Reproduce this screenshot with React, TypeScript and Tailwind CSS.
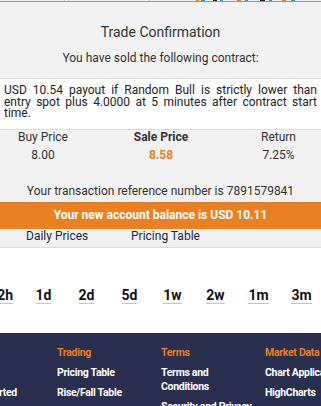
const periods = ['1d', '2d', '5d', '1w', '2w', '1m', '3m']

export default function App() {
  return (
    <div
      className="relative h-[406px] w-[321px] overflow-hidden bg-white text-[#333]"
      style={{ fontFamily: 'Roboto, "Liberation Sans", sans-serif' }}
    >
      {/* strip of the page behind the dialog */}
      <div className="flex h-px bg-[#f2f2f2]">
        <span className="ml-[64px] w-px bg-[#ccc]" />
        <span className="ml-[3px] w-px bg-[#ccc]" />
        <span className="ml-[80px] w-px bg-[#ccc]" />
        <span className="ml-[46px] w-[3px] bg-[#e98024]" />
        <span className="ml-[2px] w-[4px] bg-[#3a8fd8]" />
        <span className="ml-[8px] w-[4px] bg-[#222]" />
        <span className="ml-[3px] w-[3px] bg-[#3a8fd8]" />
        <span className="ml-[14px] w-[4px] bg-[#e98024]" />
        <span className="ml-[4px] w-[3px] bg-[#3a8fd8]" />
        <span className="ml-[12px] w-[5px] bg-[#222]" />
        <span className="ml-[4px] w-[3px] bg-[#3a8fd8]" />
        <span className="ml-[10px] w-[4px] bg-[#e98024]" />
        <span className="ml-[5px] w-[4px] bg-[#3a8fd8]" />
      </div>
      <div className="h-px bg-[#e98024]" />

      {/* trade confirmation */}
      <div className="flex flex-col bg-[#f2f2f2] pt-[20px]">
        <h1 className="text-center text-[14px] leading-[20px] font-normal">Trade Confirmation</h1>
        <p className="mt-[7px] text-center text-[12px] leading-[18px]">
          You have sold the following contract:
        </p>
        <div className="mt-[11px] border-y border-[#dcdcdc] bg-white px-[4px] pt-[6px] pb-[9px]">
          <p className="text-justify text-[12px] leading-[11.5px] text-[#222]">
            USD 10.54 payout if Random Bull is strictly lower than entry spot plus 4.0000 at 5 minutes after contract start
            time.
          </p>
        </div>
        <div className="grid grid-cols-[86px_150px_85px] text-[12px] leading-[15px]">
          <div className="flex flex-col items-center gap-[3px]">
            <span>Buy Price</span>
            <span>8.00</span>
          </div>
          <div className="flex flex-col items-center gap-[3px]">
            <span className="font-bold">Sale Price</span>
            <span className="font-bold text-[#e98024]">8.58</span>
          </div>
          <div className="flex flex-col items-center gap-[3px]">
            <span>Return</span>
            <span>7.25%</span>
          </div>
        </div>
        <p className="mt-[20px] mb-[3px] text-center text-[12px] leading-[16px]">
          Your transaction reference number is 7891579841
        </p>
        <div className="flex h-[27px] items-center justify-center bg-[#e98024] text-[12px] font-bold text-white">
          Your new account balance is USD 10.11
        </div>
        <div className="flex h-[19px] border-b border-[#dcdcdc] pl-[26px] text-[12px] leading-[14px] text-[#1f2541]">
          <span className="w-[105px]">Daily Prices</span>
          <span>Pricing Table</span>
        </div>
      </div>

      {/* periods */}
      <div className="mt-[39px] flex text-[14px] leading-[16px] font-bold text-[#111]">
        <div className="flex w-[22px] shrink-0 justify-end pr-[9px]">
          <span className="border-b border-[#c4c4c4]">2h</span>
        </div>
        {periods.map((p) => (
          <div key={p} className="flex w-[43px] shrink-0 justify-center">
            <span className="border-b border-[#c4c4c4]">{p}</span>
          </div>
        ))}
      </div>

      {/* footer */}
      <div className="mt-[29px] flex h-[80px] bg-[#2a2e4f] pt-[13px] text-[10.5px] leading-[14px] font-bold tracking-[-0.3px]">
        <div className="flex w-[57px] shrink-0 flex-col items-end gap-[6px] pr-[40px] whitespace-nowrap text-white">
          <span>&nbsp;</span>
          <span>&nbsp;</span>
          <span>Getting Started</span>
        </div>
        <div className="flex w-[104px] shrink-0 flex-col gap-[6px] whitespace-nowrap text-white">
          <span className="text-[#e98024]">Trading</span>
          <span>Pricing Table</span>
          <span>Rise/Fall Table</span>
        </div>
        <div className="flex w-[104px] shrink-0 flex-col gap-[6px] text-white">
          <span className="text-[#e98024]">Terms</span>
          <span className="w-[75px]">Terms and Conditions</span>
          <span className="whitespace-nowrap">Security and Privacy</span>
        </div>
        <div className="flex w-[104px] shrink-0 flex-col gap-[6px] whitespace-nowrap text-white">
          <span className="text-[#e98024]">Market Data</span>
          <span>Chart Application</span>
          <span>HighCharts</span>
        </div>
      </div>
    </div>
  )
}
